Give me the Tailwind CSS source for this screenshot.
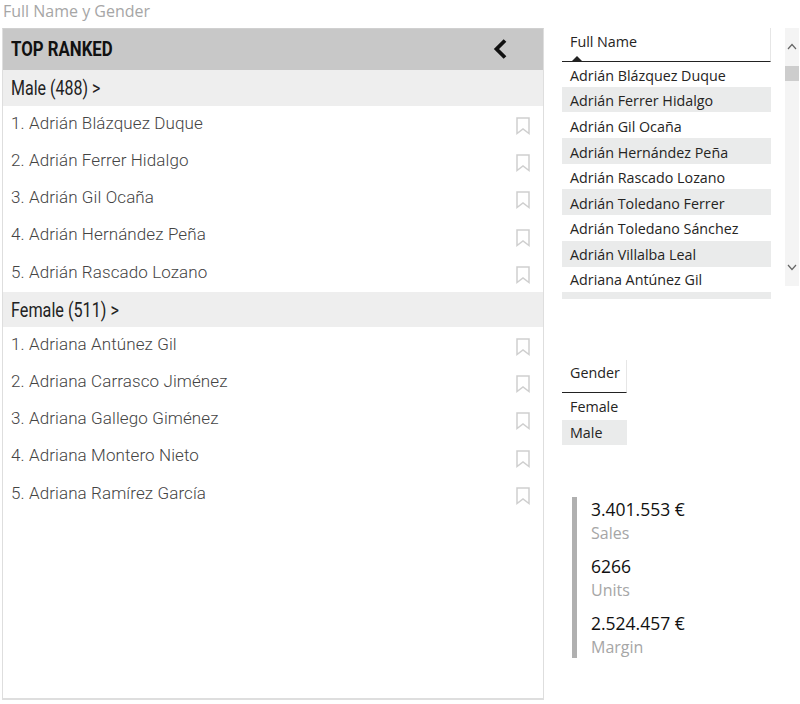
<!DOCTYPE html>
<html lang="es">
  <head>
    <meta charset="UTF-8" />
    <title>Full Name y Gender</title>
    <script src="https://cdn.jsdelivr.net/npm/@tailwindcss/browser@4"></script>
  </head>
  <body class="bg-white w-[800px] h-[704px] overflow-hidden font-['Open_Sans',sans-serif]">
    <div class="flex h-full">
      <!-- Columna izquierda -->
      <div class="w-[544px] pl-[2px] shrink-0">
        <div class="h-[28px] pl-px text-[16px] leading-[23px] text-[#a6a6a6]">Full Name y Gender</div>
        <div class="h-[672px] border border-[#dedede] border-t-[#d0d0d0] border-b-2 font-['Roboto',sans-serif]">
          <div class="h-[41px] bg-[#c8c8c8] flex items-center justify-between pl-2 pr-[36px]">
            <span class="inline-block origin-left scale-x-[0.8] font-bold text-[21px] text-[#111]">TOP RANKED</span>
            <svg width="14" height="20" viewBox="0 0 14 20" class="mb-[2px]"><path d="M12 1.5 3.5 10l8.5 8.5" fill="none" stroke="#111" stroke-width="3.8" /></svg>
          </div>

          <div class="h-[36px] bg-[#eeeeee] flex items-center pl-2 text-[#222]"><span class="inline-block origin-left scale-x-[0.8] text-[20px]">Male (488) &gt;</span></div>
          <div class="h-[186px]">
            <div class="h-[37.2px] flex items-center justify-between pl-2 pr-[13px] text-[17px] tracking-[0.1px] font-light text-[#444]"><span class="mb-[2px]">1. Adrián Blázquez Duque</span> <svg width="14" height="18" viewBox="0 0 14 18" class="mt-[3px]"><path d="M1 1h12v15.5l-6-4.5-6 4.5z" fill="none" stroke="#cfcfcf" stroke-width="1.5" /></svg></div>
            <div class="h-[37.2px] flex items-center justify-between pl-2 pr-[13px] text-[17px] tracking-[0.1px] font-light text-[#444]"><span class="mb-[2px]">2. Adrián Ferrer Hidalgo</span> <svg width="14" height="18" viewBox="0 0 14 18" class="mt-[3px]"><path d="M1 1h12v15.5l-6-4.5-6 4.5z" fill="none" stroke="#cfcfcf" stroke-width="1.5" /></svg></div>
            <div class="h-[37.2px] flex items-center justify-between pl-2 pr-[13px] text-[17px] tracking-[0.1px] font-light text-[#444]"><span class="mb-[2px]">3. Adrián Gil Ocaña</span> <svg width="14" height="18" viewBox="0 0 14 18" class="mt-[3px]"><path d="M1 1h12v15.5l-6-4.5-6 4.5z" fill="none" stroke="#cfcfcf" stroke-width="1.5" /></svg></div>
            <div class="h-[37.2px] flex items-center justify-between pl-2 pr-[13px] text-[17px] tracking-[0.1px] font-light text-[#444]"><span class="mb-[2px]">4. Adrián Hernández Peña</span> <svg width="14" height="18" viewBox="0 0 14 18" class="mt-[3px]"><path d="M1 1h12v15.5l-6-4.5-6 4.5z" fill="none" stroke="#cfcfcf" stroke-width="1.5" /></svg></div>
            <div class="h-[37.2px] flex items-center justify-between pl-2 pr-[13px] text-[17px] tracking-[0.1px] font-light text-[#444]"><span class="mb-[2px]">5. Adrián Rascado Lozano</span> <svg width="14" height="18" viewBox="0 0 14 18" class="mt-[3px]"><path d="M1 1h12v15.5l-6-4.5-6 4.5z" fill="none" stroke="#cfcfcf" stroke-width="1.5" /></svg></div>
          </div>

          <div class="h-[35px] bg-[#eeeeee] flex items-center pl-2 text-[#222]"><span class="inline-block origin-left scale-x-[0.81] text-[20px]">Female (511) &gt;</span></div>
          <div>
            <div class="h-[37.2px] flex items-center justify-between pl-2 pr-[13px] text-[17px] tracking-[0.1px] font-light text-[#444]"><span class="mb-[2px]">1. Adriana Antúnez Gil</span> <svg width="14" height="18" viewBox="0 0 14 18" class="mt-[3px]"><path d="M1 1h12v15.5l-6-4.5-6 4.5z" fill="none" stroke="#cfcfcf" stroke-width="1.5" /></svg></div>
            <div class="h-[37.2px] flex items-center justify-between pl-2 pr-[13px] text-[17px] tracking-[0.1px] font-light text-[#444]"><span class="mb-[2px]">2. Adriana Carrasco Jiménez</span> <svg width="14" height="18" viewBox="0 0 14 18" class="mt-[3px]"><path d="M1 1h12v15.5l-6-4.5-6 4.5z" fill="none" stroke="#cfcfcf" stroke-width="1.5" /></svg></div>
            <div class="h-[37.2px] flex items-center justify-between pl-2 pr-[13px] text-[17px] tracking-[0.1px] font-light text-[#444]"><span class="mb-[2px]">3. Adriana Gallego Giménez</span> <svg width="14" height="18" viewBox="0 0 14 18" class="mt-[3px]"><path d="M1 1h12v15.5l-6-4.5-6 4.5z" fill="none" stroke="#cfcfcf" stroke-width="1.5" /></svg></div>
            <div class="h-[37.2px] flex items-center justify-between pl-2 pr-[13px] text-[17px] tracking-[0.1px] font-light text-[#444]"><span class="mb-[2px]">4. Adriana Montero Nieto</span> <svg width="14" height="18" viewBox="0 0 14 18" class="mt-[3px]"><path d="M1 1h12v15.5l-6-4.5-6 4.5z" fill="none" stroke="#cfcfcf" stroke-width="1.5" /></svg></div>
            <div class="h-[37.2px] flex items-center justify-between pl-2 pr-[13px] text-[17px] tracking-[0.1px] font-light text-[#444]"><span class="mb-[2px]">5. Adriana Ramírez García</span> <svg width="14" height="18" viewBox="0 0 14 18" class="mt-[3px]"><path d="M1 1h12v15.5l-6-4.5-6 4.5z" fill="none" stroke="#cfcfcf" stroke-width="1.5" /></svg></div>
          </div>
        </div>
      </div>

      <!-- Columna derecha -->
      <div class="flex-1 pl-[18px] pt-[28px] text-[14.3px] text-[#252423]">
        <div class="flex h-[272px]">
          <div class="w-[209px] shrink-0">
            <div class="h-[34px] border-b border-b-[#222] border-r border-r-[#e6e6e6] pl-2 pt-[3px] relative">
              Full Name
              <div class="absolute left-[10px] bottom-0 w-0 h-0 border-x-[5px] border-x-transparent border-b-[5px] border-b-[#222]"></div>
            </div>
            <div class="h-[25.7px] pl-2 pt-[2px] flex items-center">Adrián Blázquez Duque</div>
            <div class="h-[25.7px] pl-2 pt-[3px] flex items-center bg-[#eaebeb] -mt-px">Adrián Ferrer Hidalgo</div>
            <div class="h-[25.7px] pl-2 pt-[3px] flex items-center">Adrián Gil Ocaña</div>
            <div class="h-[25.7px] pl-2 pt-[3px] flex items-center bg-[#eaebeb]">Adrián Hernández Peña</div>
            <div class="h-[25.7px] pl-2 pt-[3px] flex items-center">Adrián Rascado Lozano</div>
            <div class="h-[25.7px] pl-2 pt-[2px] flex items-center bg-[#eaebeb]">Adrián Toledano Ferrer</div>
            <div class="h-[25.7px] pl-2 pt-px flex items-center">Adrián Toledano Sánchez</div>
            <div class="h-[25.7px] pl-2 pt-[3px] flex items-center bg-[#eaebeb]">Adrián Villalba Leal</div>
            <div class="h-[25.7px] pl-2 pt-px flex items-center">Adriana Antúnez Gil</div>
            <div class="h-[7px] bg-[#eaebeb]"></div>
          </div>
          <div class="ml-[14px] w-[14px] h-[258px] bg-[#f4f4f4] relative">
            <svg class="absolute left-[2px] top-[15px]" width="10" height="7" viewBox="0 0 10 7"><path d="M1 6l4-4.5L9 6" fill="none" stroke="#666" stroke-width="1.2" /></svg>
            <div class="absolute top-[38px] left-0 w-full h-[15px] bg-[#cdcdcd]"></div>
            <svg class="absolute left-[2px] bottom-[15px]" width="10" height="7" viewBox="0 0 10 7"><path d="M1 1l4 4.5L9 1" fill="none" stroke="#666" stroke-width="1.2" /></svg>
          </div>
        </div>

        <div class="w-[65px] mt-[60px]">
          <div class="h-[33px] border-b border-b-[#222] border-r border-r-[#e6e6e6] pl-2 pb-[7px] flex items-center">Gender</div>
          <div class="h-[26px] pl-2 flex items-center mt-px">Female</div>
          <div class="h-[25px] pl-2 flex items-center bg-[#eaebeb]">Male</div>
        </div>

        <div class="ml-[10px] mt-[52px] w-fit h-[161px] border-l-[5px] border-l-[#b0b0b0] pl-[14px] pt-px text-[16px] leading-[23px]">
          <div class="h-[57px]"><div class="text-[17.5px] text-[#111]">3.401.553 €</div><div class="text-[#a6a6a6] mt-px">Sales</div></div>
          <div class="h-[57px]"><div class="text-[17.5px] text-[#111]">6266</div><div class="text-[#a6a6a6] mt-px">Units</div></div>
          <div class="h-[45px]"><div class="text-[17.5px] text-[#111]">2.524.457 €</div><div class="text-[#a6a6a6] mt-px">Margin</div></div>
        </div>
      </div>
    </div>
  </body>
</html>
